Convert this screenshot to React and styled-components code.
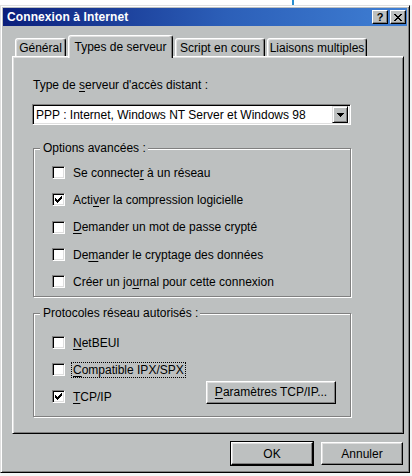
import React from 'react';
import styled, { createGlobalStyle } from 'styled-components';

const FACE = '#bdc0c0';
const LIGHT = '#ffffff';
const SHADOW = '#808080';
const DARK = '#000000';
const HILITE = '#dfdfdf';

const GlobalStyle = createGlobalStyle`
  html, body { margin: 0; padding: 0; background: #ffffff; }
  body { font-family: "Liberation Sans", Arial, sans-serif; font-size: 12px; color: #000; }
  * { box-sizing: border-box; }
`;

const Page = styled.div`
  width: 412px;
  height: 476px;
  overflow: hidden;
  background: #f3f5f5;
  display: flex;
  flex-direction: column;
`;

const TopStrip = styled.div`
  height: 5px;
  flex: none;
  display: flex;
  background: #ffffff;
`;

const Cursor = styled.div`
  margin-left: 292px;
  width: 2px;
  background: #2a8fd0;
`;

const Window = styled.div`
  width: 410px;
  height: 468px;
  flex: none;
  background: ${FACE};
  border: 1px solid;
  border-color: ${HILITE} ${DARK} ${DARK} ${HILITE};
  box-shadow: inset 1px 1px ${LIGHT}, inset -1px -1px ${SHADOW};
  padding: 2px;
  display: flex;
  flex-direction: column;
`;

const TitleBar = styled.div`
  height: 18px;
  flex: none;
  display: flex;
  align-items: center;
  padding: 0 1px 0 4px;
  background: linear-gradient(to right, #0b1f7c 0%, #2c5fb8 55%, #3f7fd4 100%);
`;

const TitleText = styled.div`
  flex: 1;
  color: #fff;
  font-weight: bold;
  font-size: 12px;
  letter-spacing: 0.1px;
`;

const CaptionButton = styled.div`
  width: 16px;
  height: 14px;
  margin-left: ${p => p.$gap || 0}px;
  background: ${FACE};
  border: 1px solid;
  border-color: ${LIGHT} ${DARK} ${DARK} ${LIGHT};
  box-shadow: inset -1px -1px ${SHADOW};
  display: flex;
  align-items: center;
  justify-content: center;
  font-weight: bold;
  font-size: 11px;
  line-height: 1;
`;

const Body = styled.div`
  display: flex;
  flex-direction: column;
  padding: 9px 0 0 9px;
`;

const TabRow = styled.div`
  height: 21px;
  display: flex;
  align-items: flex-end;
  gap: 2px;
  padding-left: 3px;
`;

const Tab = styled.div`
  position: relative;
  z-index: ${p => (p.$active ? 2 : 0)};
  width: ${p => p.$w}px;
  height: ${p => (p.$active ? 23 : 18)}px;
  margin-bottom: ${p => (p.$active ? -2 : 0)}px;
  background: ${FACE};
  border: 1px solid;
  border-bottom: none;
  border-color: ${LIGHT} ${DARK} transparent ${LIGHT};
  border-radius: 3px 3px 0 0;
  box-shadow: inset -1px 0 ${SHADOW}, inset 1px 1px ${HILITE};
  display: flex;
  justify-content: center;
  padding-top: ${p => (p.$active ? 4 : 2)}px;
  line-height: 14px;
  white-space: nowrap;
`;

const Panel = styled.div`
  position: relative;
  z-index: 1;
  width: 392px;
  height: 378px;
  border: 1px solid;
  border-color: ${LIGHT} ${DARK} ${DARK} ${LIGHT};
  box-shadow: inset 1px 1px ${HILITE}, inset -1px -1px ${SHADOW};
  padding: 21px 0 0 20px;
  display: flex;
  flex-direction: column;
`;

const Label = styled.div`
  line-height: 14px;
  height: 14px;
  white-space: nowrap;
`;

const Key = styled.span`
  text-decoration: underline;
  text-underline-offset: 2px;
`;

const Combo = styled.div`
  margin-top: 12px;
  width: 319px;
  height: 21px;
  margin-left: -1px;
  background: #fff;
  border: 1px solid;
  border-color: ${SHADOW} ${LIGHT} ${LIGHT} ${SHADOW};
  box-shadow: inset 1px 1px ${DARK}, inset -1px -1px ${HILITE};
  display: flex;
  align-items: center;
  padding: 2px 2px 2px 3px;
`;

const ComboText = styled.div`
  flex: 1;
  font-size: 12px;
  line-height: 14px;
  white-space: nowrap;
`;

const DropButton = styled.div`
  width: 16px;
  height: 17px;
  background: ${FACE};
  border: 1px solid;
  border-color: ${HILITE} ${DARK} ${DARK} ${HILITE};
  box-shadow: inset 1px 1px ${LIGHT}, inset -1px -1px ${SHADOW};
  display: flex;
  align-items: center;
  justify-content: center;
`;

const Group = styled.div`
  margin-top: ${p => p.$mt}px;
  width: 318px;
  height: ${p => p.$h}px;
  border: 1px solid ${SHADOW};
  box-shadow: inset 1px 1px ${LIGHT}, 1px 1px ${LIGHT};
  display: flex;
  flex-direction: column;
  padding: 0 14px 0 18px;
`;

const Legend = styled.div`
  align-self: flex-start;
  margin: -8px 0 0 -12px;
  padding: 0 2px 0 3px;
  background: ${FACE};
  line-height: 14px;
  white-space: nowrap;
`;

const Rows = styled.div`
  margin-top: ${p => p.$mt}px;
  display: flex;
  flex-direction: column;
`;

const Row = styled.div`
  height: ${p => p.$h}px;
  display: flex;
  align-items: center;
`;

const Box = styled.div`
  width: 13px;
  height: 13px;
  flex: none;
  background: #fff;
  border: 1px solid;
  border-color: ${SHADOW} ${LIGHT} ${LIGHT} ${SHADOW};
  box-shadow: inset 1px 1px ${DARK}, inset -1px -1px ${HILITE};
  display: flex;
  align-items: center;
  justify-content: center;
`;

const CheckText = styled.div`
  margin-left: 6px;
  line-height: 14px;
  white-space: nowrap;
  padding: 0 1px;
  border: 1px dotted ${p => (p.$focus ? '#000' : 'transparent')};
`;

const Button = styled.div`
  width: ${p => p.$w}px;
  height: ${p => p.$h || 23}px;
  flex: none;
  background: ${FACE};
  border: 1px solid;
  border-color: ${LIGHT} ${DARK} ${DARK} ${LIGHT};
  box-shadow: ${p =>
    p.$default
      ? `0 0 0 1px ${DARK}, inset -1px -1px ${SHADOW}, inset 1px 1px ${HILITE}`
      : `inset -1px -1px ${SHADOW}, inset 1px 1px ${HILITE}`};
  display: flex;
  align-items: center;
  justify-content: center;
  line-height: 14px;
  white-space: nowrap;
  margin-top: ${p => p.$mt || 0}px;
  margin-left: ${p => (p.$auto ? 'auto' : '0')};
`;

const Footer = styled.div`
  margin-top: 8px;
  width: 392px;
  display: flex;
  justify-content: flex-end;
  gap: 8px;
  padding-right: 1px;
`;

const Check = () => (
  <svg width="7" height="7" viewBox="0 0 7 7" shapeRendering="crispEdges">
    <path d="M6 0h1v3h-1zM5 1h1v3h-1zM4 2h1v3h-1zM3 3h1v3h-1zM2 4h1v3h-1zM1 3h1v3h-1zM0 2h1v3h-1z" fill="#000" />
  </svg>
);

const Arrow = () => (
  <svg width="7" height="4" viewBox="0 0 7 4" shapeRendering="crispEdges">
    <path d="M0 0h7v1h-7zM1 1h5v1h-5zM2 2h3v1h-3zM3 3h1v1h-1z" fill="#000" />
  </svg>
);

const CloseGlyph = () => (
  <svg width="8" height="7" viewBox="0 0 8 7" shapeRendering="crispEdges">
    <path d="M0 0h2v1h-2zM6 0h2v1h-2zM1 1h2v1h-2zM5 1h2v1h-2zM2 2h4v1h-4zM3 3h2v1h-2zM2 4h4v1h-4zM1 5h2v1h-2zM5 5h2v1h-2zM0 6h2v1h-2zM6 6h2v1h-2z" fill="#000" />
  </svg>
);

const CheckRow = ({ checked, focus, h, children }) => (
  <Row $h={h}>
    <Box>{checked && <Check />}</Box>
    <CheckText $focus={focus}>{children}</CheckText>
  </Row>
);

export default function App() {
  return (
    <Page>
      <GlobalStyle />
      <TopStrip>
        <Cursor />
      </TopStrip>
      <Window>
        <TitleBar>
          <TitleText>Connexion à Internet</TitleText>
          <CaptionButton>?</CaptionButton>
          <CaptionButton $gap={2}>
            <CloseGlyph />
          </CaptionButton>
        </TitleBar>
        <Body>
          <TabRow>
            <Tab $w={51}>Général</Tab>
            <Tab $w={105} $active>
              Types de serveur
            </Tab>
            <Tab $w={90}>Script en cours</Tab>
            <Tab $w={100}>Liaisons multiples</Tab>
          </TabRow>
          <Panel>
            <Label>
              Type de <Key>s</Key>erveur d'accès distant :
            </Label>
            <Combo>
              <ComboText>PPP : Internet, Windows NT Server et Windows 98</ComboText>
              <DropButton>
                <Arrow />
              </DropButton>
            </Combo>
            <Group $mt={23} $h={149}>
              <Legend>Options avancées :</Legend>
              <Rows $mt={4}>
                <CheckRow h={27.3}>
                  Se connecte<Key>r</Key> à un réseau
                </CheckRow>
                <CheckRow h={27.3} checked>
                  Acti<Key>v</Key>er la compression logicielle
                </CheckRow>
                <CheckRow h={27.3}>
                  <Key>D</Key>emander un mot de passe crypté
                </CheckRow>
                <CheckRow h={27.3}>
                  De<Key>m</Key>ander le cryptage des données
                </CheckRow>
                <CheckRow h={27.3}>
                  Créer un jo<Key>u</Key>rnal pour cette connexion
                </CheckRow>
              </Rows>
            </Group>
            <Group $mt={16} $h={104}>
              <Legend>Protocoles réseau autorisés :</Legend>
              <Rows $mt={9}>
                <CheckRow h={27}>
                  <Key>N</Key>etBEUI
                </CheckRow>
                <CheckRow h={27} focus>
                  <Key>C</Key>ompatible IPX/SPX
                </CheckRow>
                <Row $h={27}>
                  <Box>
                    <Check />
                  </Box>
                  <CheckText>
                    <Key>T</Key>CP/IP
                  </CheckText>
                  <Button $w={130} $mt={-9} $auto>
                    <span>
                      <Key>P</Key>aramètres TCP/IP...
                    </span>
                  </Button>
                </Row>
              </Rows>
            </Group>
          </Panel>
          <Footer>
            <Button $w={82} $default>
              OK
            </Button>
            <Button $w={82}>Annuler</Button>
          </Footer>
        </Body>
      </Window>
    </Page>
  );
}
